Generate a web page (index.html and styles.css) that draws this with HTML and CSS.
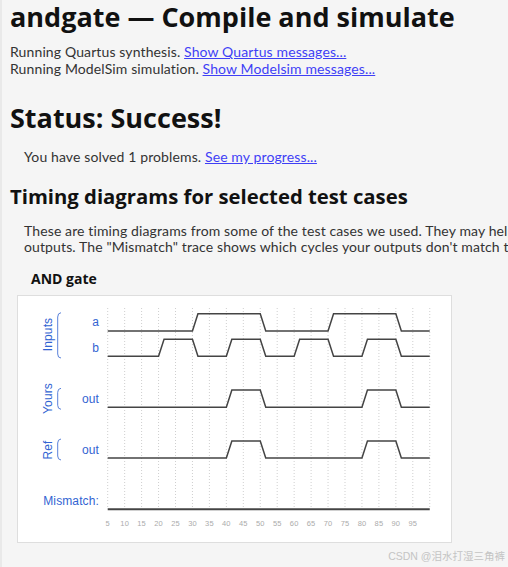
FILE: index.html
```html
<!DOCTYPE html>
<html lang="en">
<head>
<meta charset="utf-8">
<title>andgate — Compile and simulate</title>
<link rel="stylesheet" href="styles.css">
</head>
<body>
<h1 class="title">andgate — Compile and simulate</h1>
<p class="log">Running Quartus synthesis. <a href="#">Show Quartus messages...</a><br>Running ModelSim simulation. <a href="#">Show Modelsim messages...</a></p>
<h2 class="status">Status: Success!</h2>
<p class="indent solved">You have solved 1 problems. <a href="#">See my progress...</a></p>
<h3 class="section">Timing diagrams for selected test cases</h3>
<p class="indent intro">These are timing diagrams from some of the test cases we used. They may help you debug your<br>outputs. The "Mismatch" trace shows which cycles your outputs don't match the reference solution.</p>
<h4 class="case">AND gate</h4>
<div class="diagram">
<svg class="wave" width="433" height="246" viewBox="0 0 433 246" xmlns="http://www.w3.org/2000/svg">
  <g class="grid">
    <line x1="89.7" y1="12" x2="89.7" y2="213"/>
    <line x1="106.65" y1="12" x2="106.65" y2="213"/>
    <line x1="123.6" y1="12" x2="123.6" y2="213"/>
    <line x1="140.55" y1="12" x2="140.55" y2="213"/>
    <line x1="157.5" y1="12" x2="157.5" y2="213"/>
    <line x1="174.45" y1="12" x2="174.45" y2="213"/>
    <line x1="191.4" y1="12" x2="191.4" y2="213"/>
    <line x1="208.35" y1="12" x2="208.35" y2="213"/>
    <line x1="225.3" y1="12" x2="225.3" y2="213"/>
    <line x1="242.25" y1="12" x2="242.25" y2="213"/>
    <line x1="259.2" y1="12" x2="259.2" y2="213"/>
    <line x1="276.15" y1="12" x2="276.15" y2="213"/>
    <line x1="293.1" y1="12" x2="293.1" y2="213"/>
    <line x1="310.05" y1="12" x2="310.05" y2="213"/>
    <line x1="327" y1="12" x2="327" y2="213"/>
    <line x1="343.95" y1="12" x2="343.95" y2="213"/>
    <line x1="360.9" y1="12" x2="360.9" y2="213"/>
    <line x1="377.85" y1="12" x2="377.85" y2="213"/>
    <line x1="394.8" y1="12" x2="394.8" y2="213"/>
    <line x1="411.75" y1="12" x2="411.75" y2="213"/>
  </g>
  <g class="ticks">
    <text x="89.7" y="229.5">5</text>
    <text x="106.65" y="229.5">10</text>
    <text x="123.6" y="229.5">15</text>
    <text x="140.55" y="229.5">20</text>
    <text x="157.5" y="229.5">25</text>
    <text x="174.45" y="229.5">30</text>
    <text x="191.4" y="229.5">35</text>
    <text x="208.35" y="229.5">40</text>
    <text x="225.3" y="229.5">45</text>
    <text x="242.25" y="229.5">50</text>
    <text x="259.2" y="229.5">55</text>
    <text x="276.15" y="229.5">60</text>
    <text x="293.1" y="229.5">65</text>
    <text x="310.05" y="229.5">70</text>
    <text x="327" y="229.5">75</text>
    <text x="343.95" y="229.5">80</text>
    <text x="360.9" y="229.5">85</text>
    <text x="377.85" y="229.5">90</text>
    <text x="394.8" y="229.5">95</text>
  </g>
  <g class="groups">
    <text transform="translate(33.5 38.5) rotate(-90)">Inputs</text>
    <text transform="translate(33.5 102.5) rotate(-90)">Yours</text>
    <text transform="translate(33.5 154) rotate(-90)">Ref</text>
  </g>
  <g class="braces">
    <path d="M43 16.7 Q39.7 17 39.7 21 L39.7 58 Q39.7 62 43 62"/>
    <path d="M43 92.3 Q39.7 92.6 39.7 96.3 L39.7 109.3 Q39.7 113 43 113.3"/>
    <path d="M43 143 Q39.7 143.3 39.7 147 L39.7 160 Q39.7 163.7 43 164"/>
  </g>
  <g class="names">
    <text x="81" y="30.3">a</text>
    <text x="81" y="55.8">b</text>
    <text x="81" y="106.7">out</text>
    <text x="81" y="157.5">out</text>
    <text x="81" y="209.3">Mismatch:</text>
  </g>
  <g class="traces">
    <path d="M89.7 35 H174.45 L179.95 17.7 H242.25 L247.75 35 H310.05 L315.55 17.7 H377.85 L383.35 35 H411.75"/>
    <path d="M89.7 60.3 H140.55 L146.05 43.3 H174.45 L179.95 60.3 H208.35 L213.85 43.3 H242.25 L247.75 60.3 H276.15 L281.65 43.3 H310.05 L315.55 60.3 H343.95 L349.45 43.3 H377.85 L383.35 60.3 H411.75"/>
    <path d="M89.7 111.3 H208.35 L213.85 94 H242.25 L247.75 111.3 H343.95 L349.45 94 H377.85 L383.35 111.3 H411.75"/>
    <path d="M89.7 162 H208.35 L213.85 145 H242.25 L247.75 162 H343.95 L349.45 145 H377.85 L383.35 162 H411.75"/>
    <path class="mismatch" d="M89.7 213.3 H411.75"/>
  </g>
</svg>
</div>
<div class="watermark">CSDN @泪水打湿三角裤</div>
</body>
</html>
```
FILE: styles.css
```css
html {
  overflow: hidden;
}
body {
  margin: 0;
  padding: 1px 0 0 8px;
  border-left: 2px solid #e9e9e9;
  background: #f5f5f5;
  color: #333;
  font-family: Lato, "Open Sans", sans-serif;
  font-size: 14px;
  letter-spacing: 0.12px;
  min-height: 567px;
  box-sizing: border-box;
  position: relative;
  white-space: nowrap;
}
a {
  color: #3f3ff5;
}
.title,
.status,
.section,
.case {
  font-family: "Open Sans", "Liberation Sans", sans-serif;
  font-weight: 700;
  color: #111;
  letter-spacing: 0;
  margin: 0;
}
.title {
  font-size: 27px;
  line-height: 31px;
}
.log {
  margin: 12px 0 0;
  line-height: 16.7px;
}
.status {
  font-size: 27px;
  line-height: 30px;
  margin-top: 25.5px;
}
.indent {
  margin: 0 0 0 14px;
  line-height: 16.7px;
}
.solved {
  margin-top: 16px;
}
.section {
  font-size: 20.3px;
  line-height: 24px;
  margin-top: 18px;
}
.intro {
  margin-top: 14.9px;
}
.case {
  font-size: 14px;
  line-height: 18px;
  margin: 14px 0 0 21px;
}
.diagram {
  margin: 7px 0 0 7px;
  width: 435px;
  height: 248px;
  box-sizing: border-box;
  border: 1px solid #dedede;
  background: #fff;
}
.wave {
  display: block;
}
.grid line {
  stroke: #cfcfcf;
  stroke-width: 1;
  stroke-dasharray: 1 2;
}
.ticks text {
  font-family: "Liberation Sans", Arial, sans-serif;
  font-size: 7.5px;
  fill: #ababab;
  text-anchor: middle;
}
.groups text {
  font-family: "Liberation Sans", Arial, sans-serif;
  font-size: 12px;
  fill: #3264d2;
  text-anchor: middle;
}
.names text {
  font-family: "Liberation Sans", Arial, sans-serif;
  font-size: 12px;
  fill: #3264d2;
  text-anchor: end;
}
.braces path {
  fill: none;
  stroke: #5a82da;
  stroke-width: 1;
}
.traces path {
  fill: none;
  stroke: #444;
  stroke-width: 1.5;
}
.traces .mismatch {
  stroke-width: 2;
}
.watermark {
  position: absolute;
  right: 3px;
  top: 548px;
  font-family: "Liberation Sans", "Noto Sans CJK SC", sans-serif;
  font-size: 10.5px;
  letter-spacing: 0;
  color: #c4c4c4;
}
```
